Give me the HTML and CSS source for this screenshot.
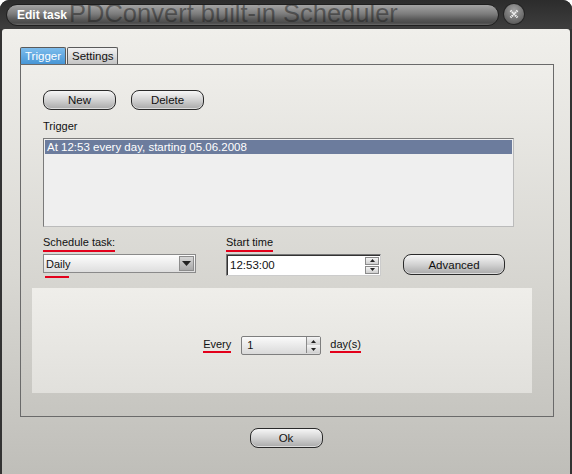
FILE: index.html
```html
<!DOCTYPE html>
<html lang="en">
<head>
  <meta charset="UTF-8">
  <title>Edit task</title>
  <link rel="stylesheet" href="styles.css">
</head>
<body>
  <div class="window">
    <div class="titlebar">
      <div class="caption">
        <span class="ghost">PDConvert built-in Scheduler</span>
        <span class="title">Edit task</span>
      </div>
      <div class="close">
        <svg width="20" height="20" viewBox="0 0 20 20">
          <path d="M6.5 6.5 L13.5 13.5 M13.5 6.5 L6.5 13.5" stroke="#f2f2f2" stroke-width="2.2" stroke-dasharray="1.4 0.8"/>
        </svg>
      </div>
    </div>
    <div class="client">
      <div class="tabs">
        <div class="tab tab--active">Trigger</div>
        <div class="tab">Settings</div>
      </div>
      <div class="page">
        <div class="upper">
          <div class="btn-row">
            <div class="btn">New</div>
            <div class="btn">Delete</div>
          </div>
          <div class="label">Trigger</div>
          <div class="list">
            <div class="list__item list__item--sel">At 12:53 every day, starting 05.06.2008</div>
          </div>
          <div class="fields">
            <div class="field field--combo">
              <span class="label mark">Schedule task:</span>
              <div class="combo">
                <span class="combo__text">Daily</span>
                <span class="combo__btn">
                  <svg width="9" height="5" viewBox="0 0 9 5"><path d="M0 0 H9 L4.5 5 Z" fill="#222"/></svg>
                </span>
              </div>
              <span class="mark-line"></span>
            </div>
            <div class="field field--time">
              <span class="label mark">Start time</span>
              <div class="time">
                <span class="time__text">12:53:00</span>
                <span class="spin">
                  <span class="spin__btn"><svg width="5" height="3" viewBox="0 0 5 3"><path d="M0 3 H5 L2.5 0 Z" fill="#222"/></svg></span>
                  <span class="spin__btn"><svg width="5" height="3" viewBox="0 0 5 3"><path d="M0 0 H5 L2.5 3 Z" fill="#222"/></svg></span>
                </span>
              </div>
            </div>
            <div class="btn btn--adv">Advanced</div>
          </div>
        </div>
        <div class="detail">
          <span class="mark">Every</span>
          <div class="num">
            <span class="num__text">1</span>
            <span class="spin spin--num">
              <span class="spin__btn"><svg width="5" height="3" viewBox="0 0 5 3"><path d="M0 3 H5 L2.5 0 Z" fill="#222"/></svg></span>
              <span class="spin__btn"><svg width="5" height="3" viewBox="0 0 5 3"><path d="M0 0 H5 L2.5 3 Z" fill="#222"/></svg></span>
            </span>
          </div>
          <span class="mark">day(s)</span>
        </div>
      </div>
      <div class="footer">
        <div class="btn">Ok</div>
      </div>
    </div>
  </div>
</body>
</html>
```

FILE: styles.css
```css
body {
  margin: 0;
  font-family: "Liberation Sans", Arial, sans-serif;
  font-size: 11px;
  color: #111;
}
.window {
  width: 572px;
  height: 474px;
  background: #333;
  display: flex;
  flex-direction: column;
  border-radius: 9px 9px 0 0;
  overflow: hidden;
}

/* title bar */
.titlebar {
  height: 29px;
  display: flex;
  align-items: flex-start;
  background: linear-gradient(#2c2c2c, #3e3e3e);
}
.caption {
  position: relative;
  margin: 4px 0 0 6px;
  width: 491px;
  height: 20px;
  border: 1px solid #1e1e1e;
  border-radius: 11px;
  background: linear-gradient(#a3a3a3, #7c7c7c 45%, #555 75%, #4a4a4a 90%, #6a6a6a);
  overflow: hidden;
  display: flex;
  align-items: center;
}
.ghost {
  position: absolute;
  left: 62px;
  top: -6px;
  font-size: 25.5px;
  color: rgba(30, 30, 30, 0.5);
  white-space: nowrap;
}
.title {
  position: relative;
  margin-left: 10px;
  font-size: 12px;
  font-weight: bold;
  color: #fff;
}
.close {
  margin: 4px 0 0 5px;
  width: 20px;
  height: 20px;
  border-radius: 50%;
  background: radial-gradient(circle at 50% 30%, #a0a0a0, #666 70%, #4a4a4a);
  box-shadow: 0 0 0 1px #252525;
}

/* client area */
.client {
  flex: 1;
  margin: 0 2px;
  padding: 18px 0 0 18px;
  background: linear-gradient(#f0efeb, #d9d8d3 55%, #bfbeb9);
  border-radius: 3px 3px 0 0;
}
.tabs {
  display: flex;
  height: 17px;
  gap: 1px;
}
.tab {
  border: 1px solid #5a5a5a;
  border-bottom: none;
  border-radius: 2px 2px 0 0;
  padding: 0 3px 0 4px;
  line-height: 16px;
  font-size: 11.5px;
  background: linear-gradient(#f2f2f2, #c4c4c4);
}
.tab--active {
  color: #fff;
  padding: 0 4px 0 4px;
  background: linear-gradient(#7dbcec, #4796d6);
}
.page {
  box-sizing: border-box;
  width: 534px;
  height: 353px;
  border: 1px solid #6a6a6a;
  padding: 25px 0 0 11px;
  background: linear-gradient(#efeeea, #d3d2cd 70%, #c6c5c0);
}
.upper {
  margin-left: 11px;
}
.btn-row {
  display: flex;
  gap: 15px;
}
.btn {
  box-sizing: border-box;
  width: 73px;
  height: 20px;
  border: 1px solid #2a2a2a;
  border-radius: 8px;
  background: linear-gradient(#f6f6f6, #d2d2d2 50%, #a9a9a9);
  box-shadow: inset 0 -1px 0 #dcdcdc;
  display: flex;
  align-items: center;
  justify-content: center;
  font-size: 11.5px;
}
.label {
  display: block;
  line-height: 14px;
  margin-top: 9px;
}
.list {
  box-sizing: border-box;
  margin-top: 5px;
  width: 471px;
  height: 89px;
  border: 1px solid #7a7a7a;
  border-right-color: #bbb;
  border-bottom-color: #bbb;
  background: #efefef;
  padding: 1px;
}
.list__item {
  height: 14px;
  line-height: 14px;
  padding-left: 2px;
  font-size: 11.5px;
}
.list__item--sel {
  background: #6c7c9d;
  color: #fff;
}
.fields {
  display: flex;
}
.field {
  display: flex;
  flex-direction: column;
  align-items: flex-start;
}
.mark {
  border-bottom: 2px solid #e3001b;
  padding-bottom: 1px;
}
.field .label {
  margin-top: 8px;
}
.combo {
  box-sizing: border-box;
  margin-top: 2px;
  width: 153px;
  height: 19px;
  border: 1px solid #8a8a8a;
  background: linear-gradient(#fdfdfd, #dedede);
  display: flex;
  align-items: center;
  justify-content: space-between;
}
.combo__text {
  padding-left: 2px;
}
.combo__btn {
  box-sizing: border-box;
  width: 15px;
  height: 15px;
  margin-right: 1px;
  border: 1px solid #8c8c8c;
  background: linear-gradient(#d6d6d6, #a9a9a9);
  display: flex;
  align-items: center;
  justify-content: center;
}
.mark-line {
  width: 24px;
  height: 2px;
  margin: 3px 0 0 2px;
  background: #e3001b;
}
.field--time {
  margin-left: 30px;
}
.time {
  box-sizing: border-box;
  margin-top: 2px;
  width: 155px;
  height: 22px;
  border: 1px solid #777;
  border-right-color: #ccc;
  border-bottom-color: #ccc;
  box-shadow: inset 1px 1px 0 #333;
  background: #fff;
  display: flex;
  align-items: center;
  justify-content: space-between;
}
.time__text {
  padding-left: 3px;
  font-size: 11.5px;
}
.spin {
  display: flex;
  flex-direction: column;
  gap: 1px;
  margin-right: 1px;
}
.spin__btn {
  box-sizing: border-box;
  width: 14px;
  height: 8px;
  border: 1px solid #8a8a8a;
  background: linear-gradient(#f4f4f4, #cfcfcf);
  display: flex;
  align-items: center;
  justify-content: center;
}
.btn--adv {
  width: 102px;
  height: 21px;
  margin: 27px 0 0 22px;
}
.detail {
  box-sizing: border-box;
  margin-top: 10px;
  width: 500px;
  height: 105px;
  padding-top: 9px;
  background: linear-gradient(#efeeea, #e1e0dc);
  display: flex;
  align-items: center;
  justify-content: center;
  gap: 9px;
}
.detail .mark:first-child {
  margin-right: 1px;
}
.num {
  box-sizing: border-box;
  width: 80px;
  height: 19px;
  border: 1px solid #7e7e7e;
  border-radius: 2px;
  background: linear-gradient(#fafafa, #d9d9d9);
  display: flex;
  align-items: center;
  justify-content: space-between;
}
.num__text {
  padding-left: 5px;
}
.spin--num {
  gap: 0;
  margin-right: 0;
  border-left: 1px solid #8a8a8a;
}
.spin--num .spin__btn {
  border: none;
  width: 13px;
}
.footer {
  display: flex;
  justify-content: center;
  margin: 11px 0 0 -18px;
}
```
